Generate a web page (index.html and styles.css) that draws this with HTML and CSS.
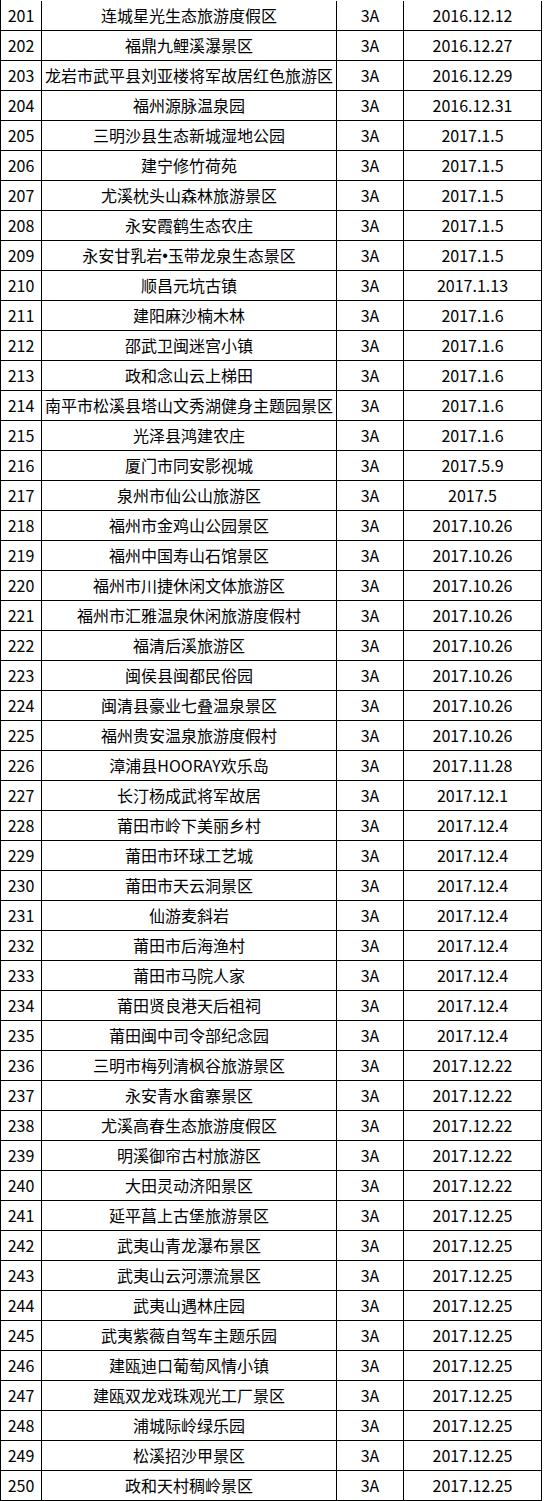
FILE: index.html
```html
<!DOCTYPE html>
<html lang="zh-CN">
<head>
<meta charset="utf-8">
<title>3A景区名单</title>
<link rel="stylesheet" href="styles.css">
</head>
<body>
<div class="list">
<div class="row"><div class="c no">201</div><div class="c name">连城星光生态旅游度假区</div><div class="c lv">3A</div><div class="c dt">2016.12.12</div></div>
<div class="row"><div class="c no">202</div><div class="c name">福鼎九鲤溪瀑景区</div><div class="c lv">3A</div><div class="c dt">2016.12.27</div></div>
<div class="row"><div class="c no">203</div><div class="c name">龙岩市武平县刘亚楼将军故居红色旅游区</div><div class="c lv">3A</div><div class="c dt">2016.12.29</div></div>
<div class="row"><div class="c no">204</div><div class="c name">福州源脉温泉园</div><div class="c lv">3A</div><div class="c dt">2016.12.31</div></div>
<div class="row"><div class="c no">205</div><div class="c name">三明沙县生态新城湿地公园</div><div class="c lv">3A</div><div class="c dt">2017.1.5</div></div>
<div class="row"><div class="c no">206</div><div class="c name">建宁修竹荷苑</div><div class="c lv">3A</div><div class="c dt">2017.1.5</div></div>
<div class="row"><div class="c no">207</div><div class="c name">尤溪枕头山森林旅游景区</div><div class="c lv">3A</div><div class="c dt">2017.1.5</div></div>
<div class="row"><div class="c no">208</div><div class="c name">永安霞鹤生态农庄</div><div class="c lv">3A</div><div class="c dt">2017.1.5</div></div>
<div class="row"><div class="c no">209</div><div class="c name">永安甘乳岩<span class="dot">•</span>玉带龙泉生态景区</div><div class="c lv">3A</div><div class="c dt">2017.1.5</div></div>
<div class="row"><div class="c no">210</div><div class="c name">顺昌元坑古镇</div><div class="c lv">3A</div><div class="c dt">2017.1.13</div></div>
<div class="row"><div class="c no">211</div><div class="c name">建阳麻沙楠木林</div><div class="c lv">3A</div><div class="c dt">2017.1.6</div></div>
<div class="row"><div class="c no">212</div><div class="c name">邵武卫闽迷宫小镇</div><div class="c lv">3A</div><div class="c dt">2017.1.6</div></div>
<div class="row"><div class="c no">213</div><div class="c name">政和念山云上梯田</div><div class="c lv">3A</div><div class="c dt">2017.1.6</div></div>
<div class="row"><div class="c no">214</div><div class="c name">南平市松溪县塔山文秀湖健身主题园景区</div><div class="c lv">3A</div><div class="c dt">2017.1.6</div></div>
<div class="row"><div class="c no">215</div><div class="c name">光泽县鸿建农庄</div><div class="c lv">3A</div><div class="c dt">2017.1.6</div></div>
<div class="row"><div class="c no">216</div><div class="c name">厦门市同安影视城</div><div class="c lv">3A</div><div class="c dt">2017.5.9</div></div>
<div class="row"><div class="c no">217</div><div class="c name">泉州市仙公山旅游区</div><div class="c lv">3A</div><div class="c dt">2017.5</div></div>
<div class="row"><div class="c no">218</div><div class="c name">福州市金鸡山公园景区</div><div class="c lv">3A</div><div class="c dt">2017.10.26</div></div>
<div class="row"><div class="c no">219</div><div class="c name">福州中国寿山石馆景区</div><div class="c lv">3A</div><div class="c dt">2017.10.26</div></div>
<div class="row"><div class="c no">220</div><div class="c name">福州市川捷休闲文体旅游区</div><div class="c lv">3A</div><div class="c dt">2017.10.26</div></div>
<div class="row"><div class="c no">221</div><div class="c name">福州市汇雅温泉休闲旅游度假村</div><div class="c lv">3A</div><div class="c dt">2017.10.26</div></div>
<div class="row"><div class="c no">222</div><div class="c name">福清后溪旅游区</div><div class="c lv">3A</div><div class="c dt">2017.10.26</div></div>
<div class="row"><div class="c no">223</div><div class="c name">闽侯县闽都民俗园</div><div class="c lv">3A</div><div class="c dt">2017.10.26</div></div>
<div class="row"><div class="c no">224</div><div class="c name">闽清县豪业七叠温泉景区</div><div class="c lv">3A</div><div class="c dt">2017.10.26</div></div>
<div class="row"><div class="c no">225</div><div class="c name">福州贵安温泉旅游度假村</div><div class="c lv">3A</div><div class="c dt">2017.10.26</div></div>
<div class="row"><div class="c no">226</div><div class="c name">漳浦县HOORAY欢乐岛</div><div class="c lv">3A</div><div class="c dt">2017.11.28</div></div>
<div class="row"><div class="c no">227</div><div class="c name">长汀杨成武将军故居</div><div class="c lv">3A</div><div class="c dt">2017.12.1</div></div>
<div class="row"><div class="c no">228</div><div class="c name">莆田市岭下美丽乡村</div><div class="c lv">3A</div><div class="c dt">2017.12.4</div></div>
<div class="row"><div class="c no">229</div><div class="c name">莆田市环球工艺城</div><div class="c lv">3A</div><div class="c dt">2017.12.4</div></div>
<div class="row"><div class="c no">230</div><div class="c name">莆田市天云洞景区</div><div class="c lv">3A</div><div class="c dt">2017.12.4</div></div>
<div class="row"><div class="c no">231</div><div class="c name">仙游麦斜岩</div><div class="c lv">3A</div><div class="c dt">2017.12.4</div></div>
<div class="row"><div class="c no">232</div><div class="c name">莆田市后海渔村</div><div class="c lv">3A</div><div class="c dt">2017.12.4</div></div>
<div class="row"><div class="c no">233</div><div class="c name">莆田市马院人家</div><div class="c lv">3A</div><div class="c dt">2017.12.4</div></div>
<div class="row"><div class="c no">234</div><div class="c name">莆田贤良港天后祖祠</div><div class="c lv">3A</div><div class="c dt">2017.12.4</div></div>
<div class="row"><div class="c no">235</div><div class="c name">莆田闽中司令部纪念园</div><div class="c lv">3A</div><div class="c dt">2017.12.4</div></div>
<div class="row"><div class="c no">236</div><div class="c name">三明市梅列清枫谷旅游景区</div><div class="c lv">3A</div><div class="c dt">2017.12.22</div></div>
<div class="row"><div class="c no">237</div><div class="c name">永安青水畲寨景区</div><div class="c lv">3A</div><div class="c dt">2017.12.22</div></div>
<div class="row"><div class="c no">238</div><div class="c name">尤溪高春生态旅游度假区</div><div class="c lv">3A</div><div class="c dt">2017.12.22</div></div>
<div class="row"><div class="c no">239</div><div class="c name">明溪御帘古村旅游区</div><div class="c lv">3A</div><div class="c dt">2017.12.22</div></div>
<div class="row"><div class="c no">240</div><div class="c name">大田灵动济阳景区</div><div class="c lv">3A</div><div class="c dt">2017.12.22</div></div>
<div class="row"><div class="c no">241</div><div class="c name">延平菖上古堡旅游景区</div><div class="c lv">3A</div><div class="c dt">2017.12.25</div></div>
<div class="row"><div class="c no">242</div><div class="c name">武夷山青龙瀑布景区</div><div class="c lv">3A</div><div class="c dt">2017.12.25</div></div>
<div class="row"><div class="c no">243</div><div class="c name">武夷山云河漂流景区</div><div class="c lv">3A</div><div class="c dt">2017.12.25</div></div>
<div class="row"><div class="c no">244</div><div class="c name">武夷山遇林庄园</div><div class="c lv">3A</div><div class="c dt">2017.12.25</div></div>
<div class="row"><div class="c no">245</div><div class="c name">武夷紫薇自驾车主题乐园</div><div class="c lv">3A</div><div class="c dt">2017.12.25</div></div>
<div class="row"><div class="c no">246</div><div class="c name">建瓯迪口葡萄风情小镇</div><div class="c lv">3A</div><div class="c dt">2017.12.25</div></div>
<div class="row"><div class="c no">247</div><div class="c name">建瓯双龙戏珠观光工厂景区</div><div class="c lv">3A</div><div class="c dt">2017.12.25</div></div>
<div class="row"><div class="c no">248</div><div class="c name">浦城际岭绿乐园</div><div class="c lv">3A</div><div class="c dt">2017.12.25</div></div>
<div class="row"><div class="c no">249</div><div class="c name">松溪招沙甲景区</div><div class="c lv">3A</div><div class="c dt">2017.12.25</div></div>
<div class="row"><div class="c no">250</div><div class="c name">政和天村稠岭景区</div><div class="c lv">3A</div><div class="c dt">2017.12.25</div></div>
</div>
</body>
</html>
```
FILE: styles.css
```css
html, body {
  margin: 0;
  padding: 0;
  background: #fff;
}
body {
  font-family: "Noto Sans CJK SC", "Noto Sans", sans-serif;
  font-size: 16px;
  color: #000;
}
.list {
  width: 542px;
  padding-top: 1px;
  box-sizing: border-box;
  border-left: 1px solid #000;
}
.row {
  display: grid;
  grid-template-columns: 41px 295px 67px 138px;
  height: 30px;
  box-sizing: border-box;
  border-bottom: 1px solid #000;
}
.c {
  box-sizing: border-box;
  border-right: 1px solid #000;
  display: flex;
  align-items: center;
  justify-content: center;
  line-height: 29px;
  white-space: nowrap;
  overflow: hidden;
}
.dot {
  font-family: "Liberation Sans", sans-serif;
}
```
